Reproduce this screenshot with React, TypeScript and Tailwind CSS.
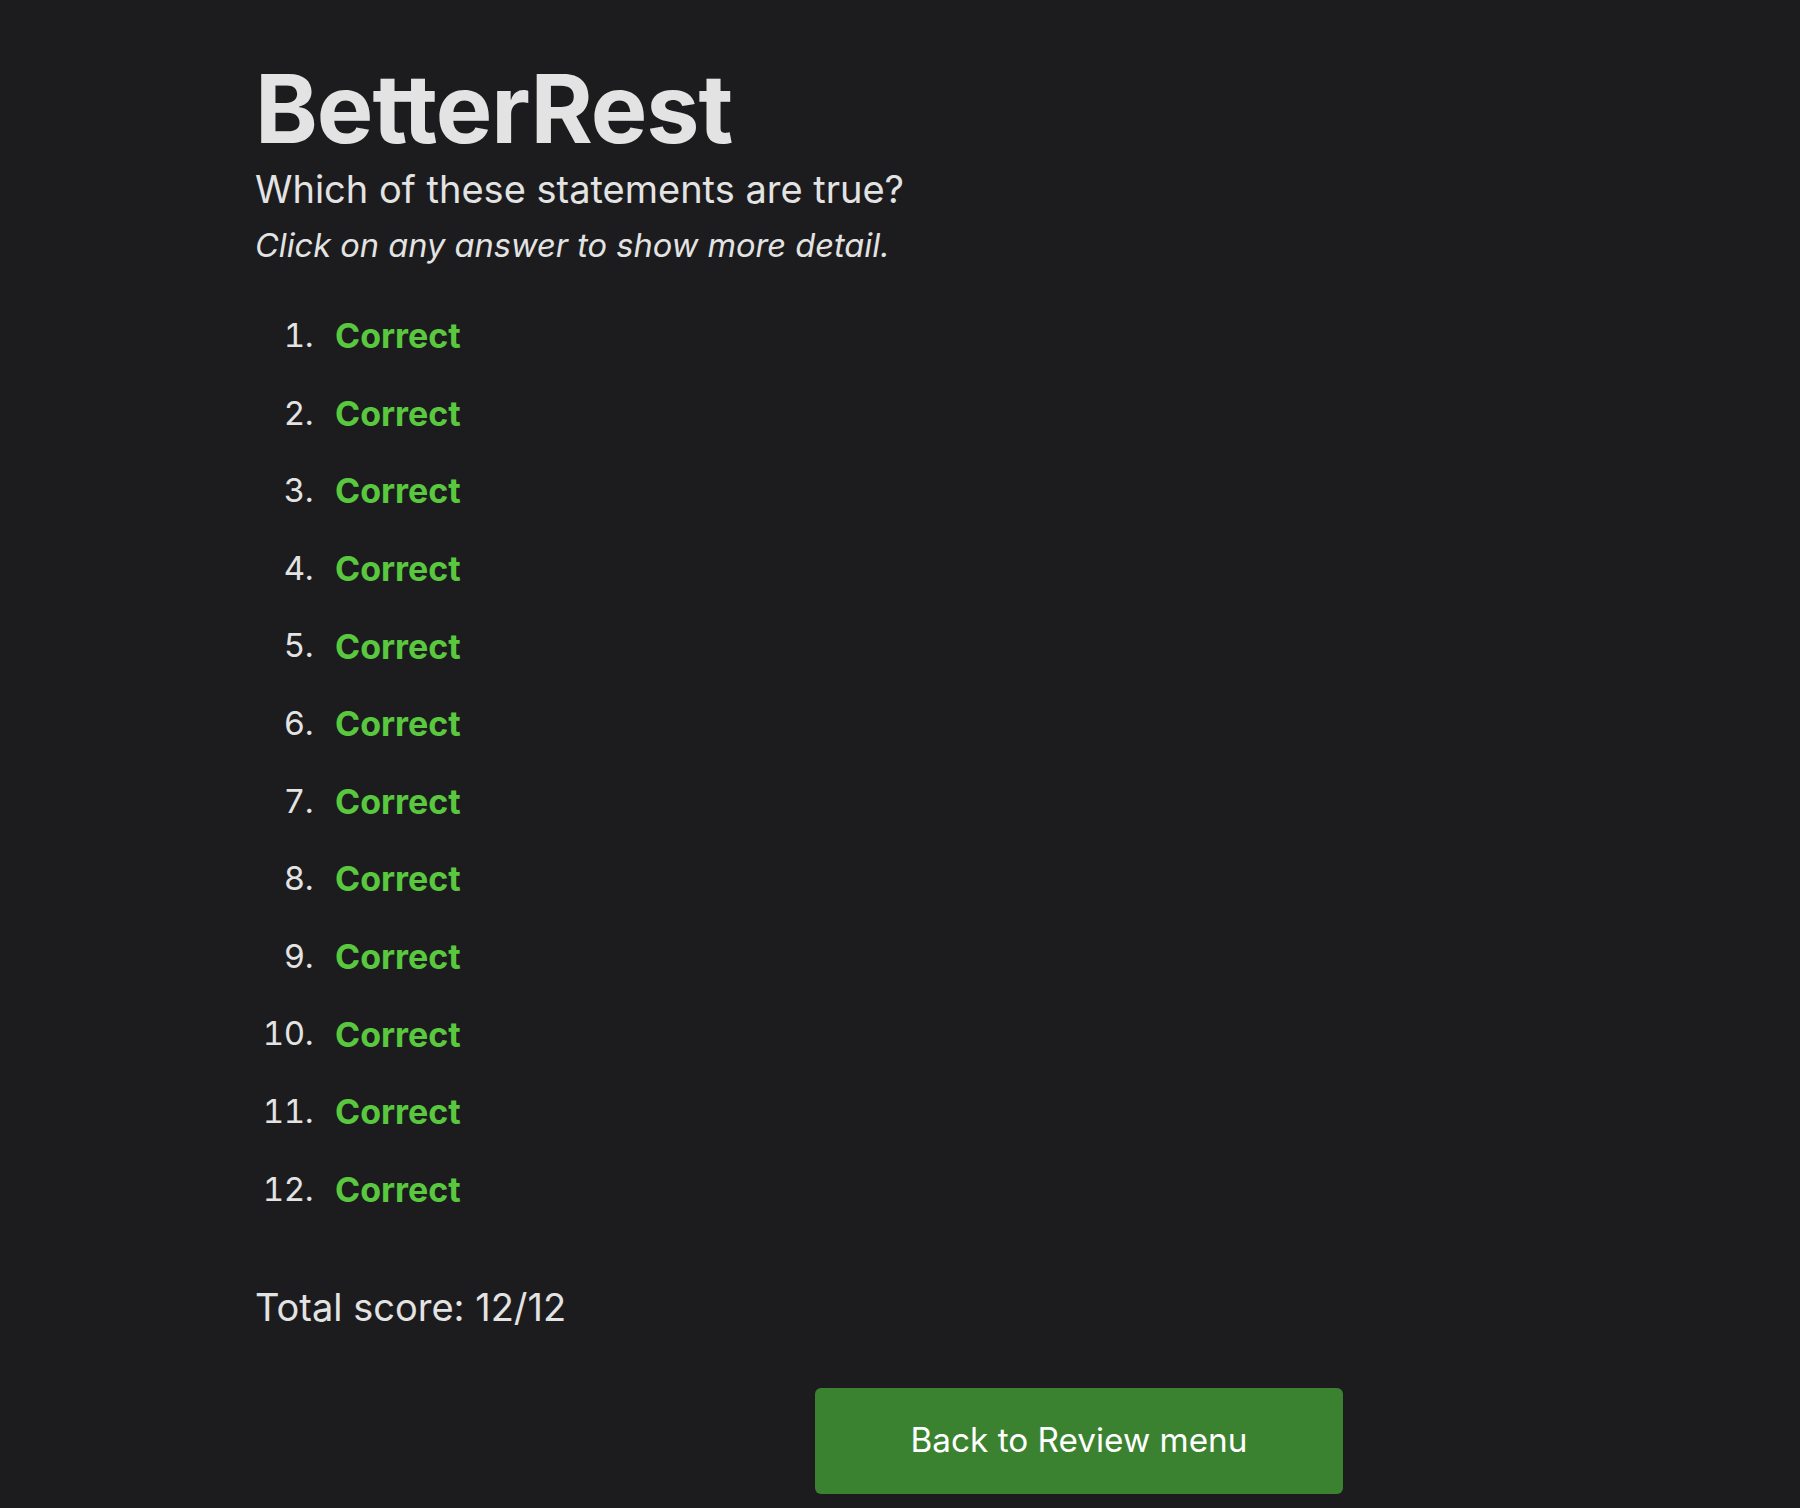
import React from "react";

export default function App() {
  const items = Array.from({ length: 12 }, (_, i) => i + 1);
  return (
    <div
      className="min-h-[1508px] w-full bg-[#1c1c1e] text-[#e3e3e3]"
      style={{ fontFamily: "Inter, 'Noto Sans', sans-serif" }}
    >
      <div className="pl-[255px] pt-[55px]">
        <h1 className="text-[95px] font-bold leading-[108px] tracking-[-1px]">BetterRest</h1>
        <p className="mt-[2px] text-[38px] leading-[48px]">Which of these statements are true?</p>
        <p className="mt-[10px] text-[32.6px] italic leading-[44px]">Click on any answer to show more detail.</p>
        <ol className="mt-[30px] flex flex-col">
          {items.map((n) => (
            <li key={n} className="flex h-[77.6px] items-center">
              <span className="w-[58px] text-right text-[33px] tabular-nums tracking-[-0.5px]">{n}.</span>
              <span className="ml-[22px] text-[34px] font-bold text-[#5ac83f]">Correct</span>
            </li>
          ))}
        </ol>
        <p className="mt-[55px] text-[38px] leading-[48px]">Total score: 12/12</p>
        <button className="ml-[560px] mt-[57px] flex h-[106px] w-[528px] items-center justify-center rounded-[6px] bg-[#3b8230] text-[33.3px] text-white">
          Back to Review menu
        </button>
      </div>
    </div>
  );
}
